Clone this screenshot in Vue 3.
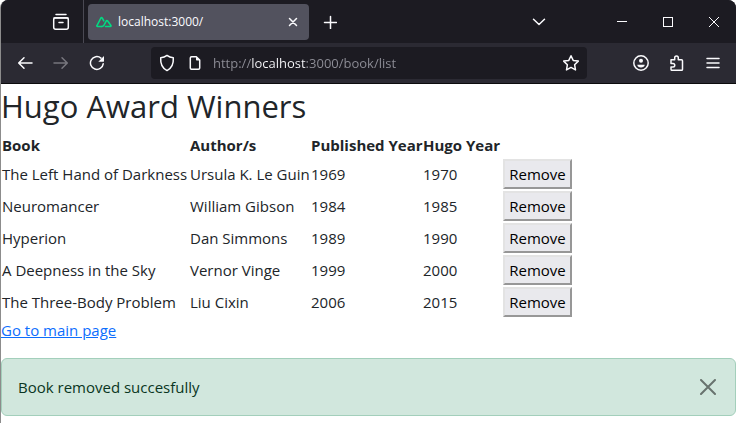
<script setup>
import { ref } from 'vue'

const address = ref('http://localhost:3000/book/list')
const notice = ref('Book removed succesfully')

const books = ref([
  { title: 'The Left Hand of Darkness', author: 'Ursula K. Le Guin', published: 1969, hugo: 1970 },
  { title: 'Neuromancer', author: 'William Gibson', published: 1984, hugo: 1985 },
  { title: 'Hyperion', author: 'Dan Simmons', published: 1989, hugo: 1990 },
  { title: 'A Deepness in the Sky', author: 'Vernor Vinge', published: 1999, hugo: 2000 },
  { title: 'The Three-Body Problem', author: 'Liu Cixin', published: 2006, hugo: 2015 }
])

function removeBook(book) {
  books.value = books.value.filter((b) => b !== book)
  notice.value = 'Book removed succesfully'
}
</script>

<template>
  <div class="window">
    <header class="chrome">
      <div class="tabbar">
        <div class="view">
          <button class="icon-btn" type="button" aria-label="Recent browsing">
            <svg width="18" height="18" viewBox="0 0 18 18">
              <path d="M4 1.5h10" />
              <rect x="1.7" y="4.7" width="14.6" height="11.6" rx="2" />
              <path d="M2 5h14" />
              <path d="M7 9.5h4" />
            </svg>
          </button>
        </div>
        <div class="tab">
          <svg class="nuxt" width="16" height="12" viewBox="0 0 16 12">
            <path d="M6 10.500H1.500c-.6 0-.8-.5-.5-1L5 1.900c.3-.6.9-.6 1.200 0l1.600 2.900" />
            <path d="M5.800 10.500c1.100 0 1.700-.5 2.200-1.300l2.300-4.400c.3-.5.900-.5 1.200 0l3.400 4.700c.3.5 0 1-.5 1H9.500" />
          </svg>
          <span class="tab-title">localhost:3000/</span>
          <button class="tab-close" type="button" aria-label="Close tab">
            <svg width="10" height="10" viewBox="0 0 10 10"><path d="M1.5 1.5l7 7M8.5 1.5l-7 7" /></svg>
          </button>
        </div>
        <button class="icon-btn new-tab" type="button" aria-label="New tab">
          <svg width="14" height="14" viewBox="0 0 14 14"><path d="M7.5 1.5v12M1.5 7.5h12" /></svg>
        </button>
        <button class="icon-btn all-tabs" type="button" aria-label="List all tabs">
          <svg width="14" height="14" viewBox="0 0 14 14"><path d="M1.5 4.2l5.5 5.3 5.5-5.3" /></svg>
        </button>
        <div class="controls">
          <button type="button" aria-label="Minimize">
            <svg width="12" height="12" viewBox="0 0 12 12"><path d="M1 5.5h10" /></svg>
          </button>
          <button type="button" aria-label="Maximize">
            <svg width="12" height="12" viewBox="0 0 12 12"><rect x="1.5" y="1.5" width="9" height="9" /></svg>
          </button>
          <button type="button" aria-label="Close window">
            <svg width="12" height="12" viewBox="0 0 12 12"><path d="M1 1l10 10M11 1L1 11" /></svg>
          </button>
        </div>
      </div>

      <div class="toolbar">
        <nav class="group">
          <button class="icon-btn" type="button" aria-label="Back">
            <svg width="16" height="16" viewBox="0 0 16 16"><path d="M15 8H1.8M7 2.7L1.7 8 7 13.3" /></svg>
          </button>
          <button class="icon-btn dim" type="button" aria-label="Forward" disabled>
            <svg width="16" height="16" viewBox="0 0 16 16"><path d="M1 8h13.2M9 2.7L14.3 8 9 13.3" /></svg>
          </button>
          <button class="icon-btn" type="button" aria-label="Reload">
            <svg width="16" height="16" viewBox="0 0 16 16">
              <path d="M14.2 8.8A6.4 6.4 0 1 1 12 3.1" />
              <path class="solid" d="M15 1v5.2c0 .3-.2.5-.5.5H9.3z" />
            </svg>
          </button>
        </nav>

        <div class="urlbar">
          <svg width="16" height="18" viewBox="0 0 16 18">
            <path d="M8 1.4c2 1.6 4 2.2 6.3 2.4.4 6-1.6 10.5-6.3 12.8C3.3 14.3 1.3 9.8 1.7 3.8 4 3.6 6 3 8 1.4z" />
          </svg>
          <svg class="page-icon" width="12" height="16" viewBox="0 0 12 16">
            <path d="M7.3 1.7H2.5c-.7 0-1.2.5-1.2 1.2v10.2c0 .7.5 1.2 1.2 1.2h7c.7 0 1.2-.5 1.2-1.2V5z" />
            <path class="solid" d="M7 1.5l4 4H8c-.6 0-1-.4-1-1z" />
          </svg>
          <input v-model="address" class="address" type="text" aria-label="Address" spellcheck="false" />
          <button class="star" type="button" aria-label="Bookmark this page">
            <svg width="18" height="18" viewBox="0 0 18 18">
              <path d="M9 1.7l2.2 4.7 5.1.7-3.7 3.6.9 5.2L9 13.4l-4.5 2.5.9-5.2L1.700 7.100l5.1-.7z" />
            </svg>
          </button>
        </div>

        <div class="group">
          <button class="icon-btn" type="button" aria-label="Account">
            <svg width="16" height="16" viewBox="0 0 16 16">
              <circle cx="8" cy="8" r="7.2" />
              <circle class="solid" cx="8" cy="5.8" r="2" />
              <path class="solid" d="M4.3 9.8h7.4c0 1.7-1.7 2.8-3.7 2.8s-3.7-1.1-3.7-2.8z" />
            </svg>
          </button>
          <button class="icon-btn" type="button" aria-label="Extensions">
            <svg width="16" height="16" viewBox="0 0 16 16">
              <path d="M2 4.7h3.7V2.800a1.800 1.800 0 0 1 3.600 0v1.900h3.200c.6 0 1 .4 1 1v8.600c0 .6-.4 1-1 1H3c-.6 0-1-.4-1-1v-2.200h2a1.700 1.700 0 0 0 0-3.500H2z" />
            </svg>
          </button>
          <button class="icon-btn" type="button" aria-label="Menu">
            <svg class="thin" width="14" height="14" viewBox="0 0 14 14"><path d="M1 2.5h12M1 7h12M1 11.5h12" /></svg>
          </button>
        </div>
      </div>
    </header>

    <main class="page">
      <h1>Hugo Award Winners</h1>
      <table>
        <colgroup>
          <col class="col-book" />
          <col class="col-author" />
          <col class="col-published" />
          <col class="col-hugo" />
          <col class="col-action" />
        </colgroup>
        <thead>
          <tr>
            <th scope="col">Book</th>
            <th scope="col">Author/s</th>
            <th scope="col">Published Year</th>
            <th scope="col">Hugo Year</th>
            <td></td>
          </tr>
        </thead>
        <tbody>
          <tr v-for="book in books" :key="book.title">
            <td>{{ book.title }}</td>
            <td>{{ book.author }}</td>
            <td>{{ book.published }}</td>
            <td>{{ book.hugo }}</td>
            <td><button class="remove" type="button" @click="removeBook(book)">Remove</button></td>
          </tr>
        </tbody>
      </table>
      <a class="home" href="#/">Go to main page</a>
      <div v-if="notice" class="alert" role="alert">
        <span>{{ notice }}</span>
        <button class="dismiss" type="button" aria-label="Close" @click="notice = ''">
          <svg width="16" height="16" viewBox="0 0 16 16"><path d="M1 1l14 14M15 1L1 15" /></svg>
        </button>
      </div>
    </main>
  </div>
</template>

<style>
body {
  margin: 0;
  background: #fff;
}
</style>

<style scoped>
.window {
  box-sizing: border-box;
  min-height: 100vh;
  border-left: 1px solid #8c8c8c;
  border-radius: 8px 8px 0 0;
  overflow: hidden;
  font-family: "Segoe UI", "Open Sans", "Noto Sans", sans-serif;
  color: #212529;
}

button {
  margin: 0;
  padding: 0;
  border: 0;
  background: none;
  font: inherit;
  color: inherit;
}

svg {
  display: block;
  flex: none;
  fill: none;
  stroke: currentColor;
  stroke-width: 1.5;
  stroke-linecap: round;
  stroke-linejoin: round;
}

.solid {
  fill: currentColor;
  stroke: none;
}

.chrome {
  color: #fbfbfe;
  background: #2b2a33;
  border-bottom: 1px solid #0c0c0d;
}

.tabbar {
  display: flex;
  align-items: center;
  height: 43px;
  background: #1c1b22;
}

.view {
  display: flex;
  align-items: center;
  justify-content: flex-end;
  box-sizing: border-box;
  width: 83px;
  height: 100%;
  padding-right: 6px;
  border-right: 1px solid #4a4953;
}

.icon-btn {
  display: flex;
  align-items: center;
  justify-content: center;
  width: 32px;
  height: 32px;
}

.tab {
  display: flex;
  align-items: center;
  gap: 6px;
  box-sizing: border-box;
  width: 221px;
  height: 36px;
  margin-left: 4px;
  padding: 0 8px;
  border-radius: 4px;
  background: #52525e;
}

.nuxt {
  color: #00dc82;
  stroke-width: 1.6;
}

.tab-title {
  flex: 1;
  font-size: 12px;
  line-height: 16px;
}

.tab-close {
  display: flex;
  align-items: center;
  justify-content: center;
  width: 16px;
  height: 16px;
}

.new-tab {
  margin-left: 5px;
}

.all-tabs {
  margin-left: auto;
}

.controls {
  display: flex;
  gap: 2px;
  margin-left: 45px;
}

.controls button {
  display: flex;
  align-items: center;
  justify-content: center;
  width: 44px;
  height: 42px;
}

.controls svg {
  stroke-width: 1;
  stroke-linecap: butt;
  stroke-linejoin: miter;
}

.toolbar {
  display: flex;
  align-items: center;
  gap: 38px;
  height: 40px;
  padding: 0 7px 0 8px;
}

.group {
  display: flex;
  gap: 4px;
}

.dim {
  color: #77767e;
}

.urlbar {
  display: flex;
  flex: 1;
  align-items: center;
  box-sizing: border-box;
  min-width: 0;
  height: 32px;
  padding: 0 7px 0 8px;
  border-radius: 4px;
  background: #1c1b22;
}

.page-icon {
  margin-left: 14px;
}

.address {
  flex: 1;
  min-width: 0;
  height: 24px;
  margin: 0 12px;
  padding: 0;
  border: 0;
  outline: 0;
  font-family: inherit;
  font-size: 13px;
  color: transparent;
  caret-color: #fbfbfe;
  /* dims everything but the host name */
  background: linear-gradient(to right, #8f8f98 38px, #fbfbfe 38px 93px, #8f8f98 93px);
  background-clip: text;
}

.page {
  font-size: 15px;
  line-height: 24px;
}

h1 {
  margin: 0 0 4px;
  font-size: 31px;
  font-weight: 400;
  line-height: 44px;
}

table {
  table-layout: fixed;
  width: 572px;
  border-collapse: collapse;
}

.col-book {
  width: 188px;
}

.col-author {
  width: 121px;
}

.col-published {
  width: 112px;
}

.col-hugo {
  width: 80px;
}

.col-action {
  width: 71px;
}

th,
td {
  padding: 1px;
  text-align: left;
  white-space: nowrap;
}

th {
  font-weight: 700;
}

.remove {
  display: block;
  box-sizing: border-box;
  width: 100%;
  height: 30px;
  border: 2px solid;
  border-color: #e3e3e3 #979797 #979797 #e3e3e3;
  background: #e9e9ed;
  color: #000;
}

.home {
  display: table;
  color: #0d6efd;
}

.alert {
  display: flex;
  align-items: center;
  justify-content: space-between;
  margin-top: 16px;
  padding: 16px 19px 16px 16px;
  border: 1px solid #a3cfbb;
  border-radius: 6px;
  background: #d1e7dd;
  color: #0a3622;
}

.dismiss svg {
  color: #68736e;
  stroke-width: 2;
}
</style>
